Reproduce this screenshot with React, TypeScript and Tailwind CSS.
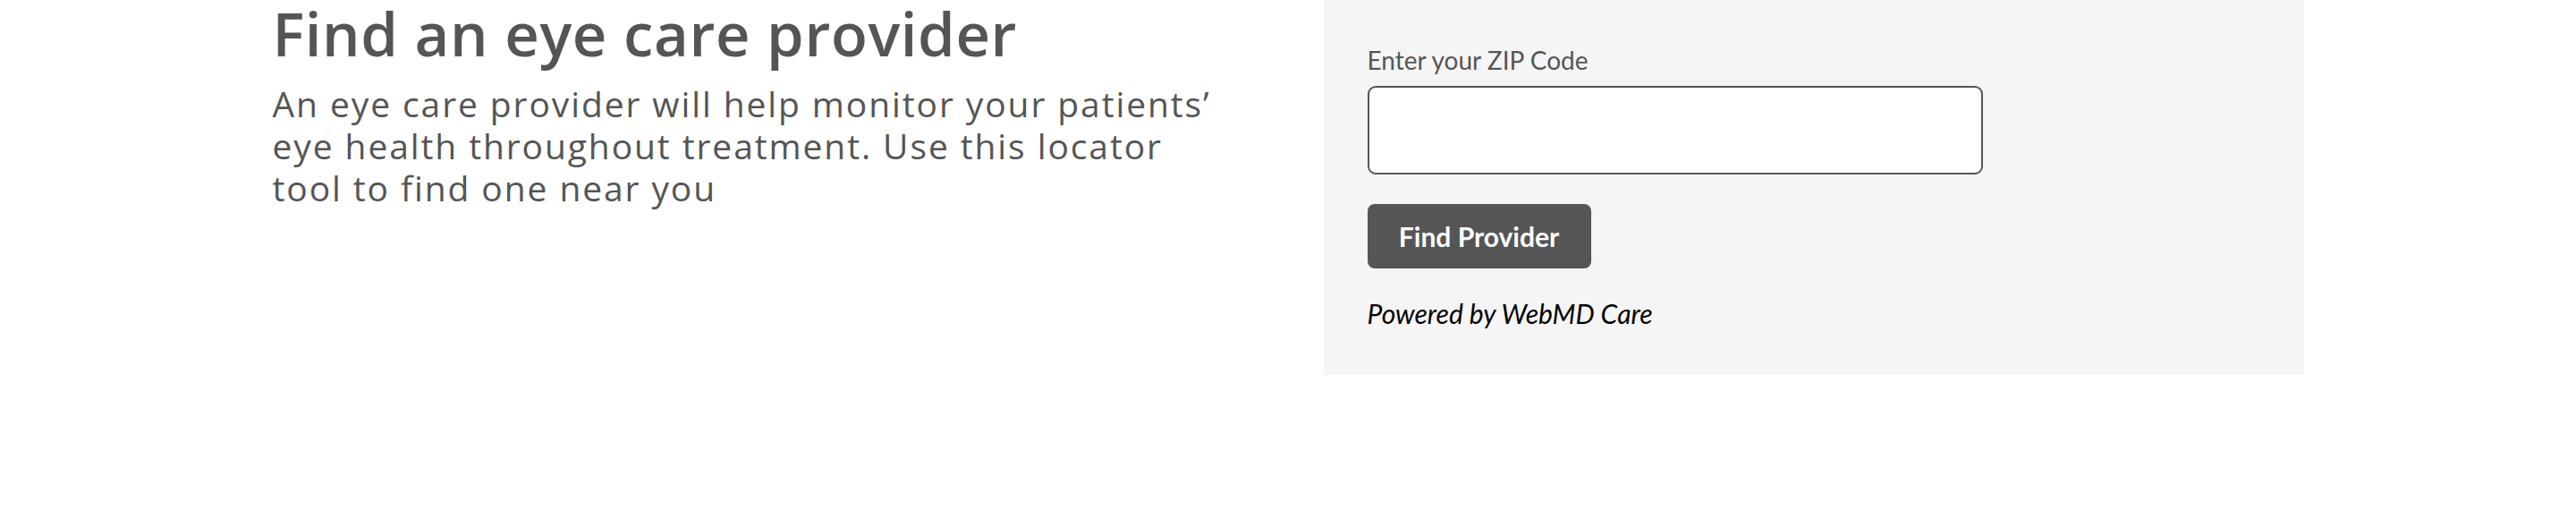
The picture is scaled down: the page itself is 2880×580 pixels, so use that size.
import { useState } from 'react'

export default function App() {
  const [zip, setZip] = useState('')

  return (
    <div className="w-full h-[580px] bg-white" style={{ fontFamily: 'Lato, "Open Sans", sans-serif' }}>
      <div className="mx-auto w-[2271px] flex items-start gap-[79px]">
        <div className="w-[1096px] pt-[2px] font-['Open_Sans',sans-serif]">
          <h1 className="text-[67px] leading-[70px] tracking-[0.6px] font-semibold text-[#555555]">
            Find an eye care provider
          </h1>
          <p className="mt-[20px] w-[1062px] text-[39px] leading-[47px] tracking-[1.9px] text-[#555555]">
            An eye care provider will help monitor your patients’ eye health throughout treatment. Use this locator tool to find one near you
          </p>
        </div>

        <div className="w-[1096px] bg-[#f5f5f5] pl-[49px] pt-[50px] pb-[51px]">
          <label htmlFor="zip" className="block text-[28px] leading-[34px] text-[#555555]">
            Enter your ZIP Code
          </label>
          <input
            id="zip"
            type="text"
            value={zip}
            onChange={e => setZip(e.target.value)}
            className="mt-[12px] block w-[688px] h-[99px] rounded-[9px] border-2 border-[#555555] bg-white px-4 text-[28px] outline-none"
          />
          <button className="mt-[33px] flex items-center justify-center w-[250px] h-[72px] rounded-[8px] bg-[#555555] text-white text-[30px] font-bold">
            Find Provider
          </button>
          <p className="mt-[32px] text-[30px] leading-[36px] italic text-black">
            Powered by WebMD Care
          </p>
        </div>
      </div>
    </div>
  )
}
